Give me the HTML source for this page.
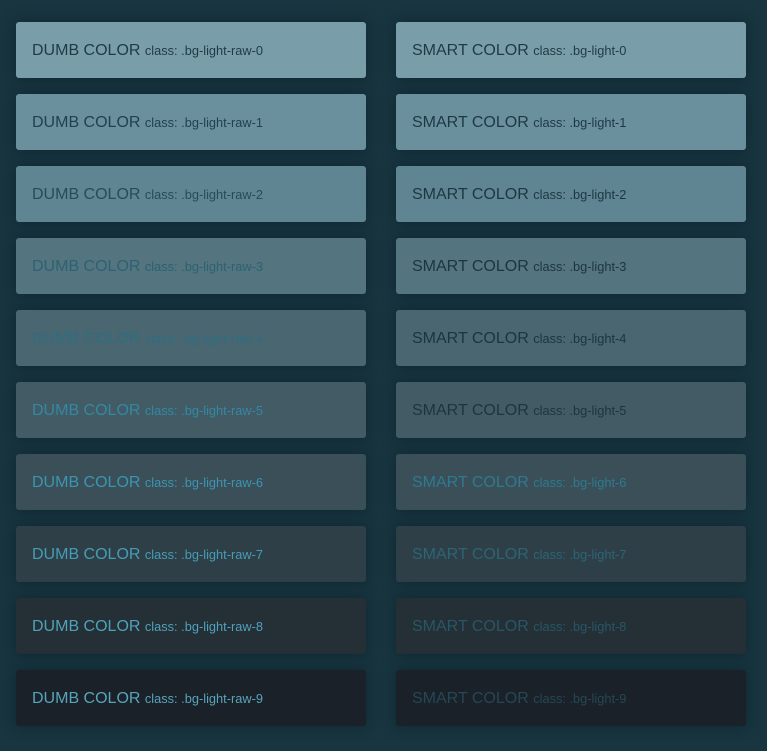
<!DOCTYPE html>
<html><head><meta charset="utf-8"><style>
html,body{margin:0;padding:0;}
body{width:767px;height:751px;background:#183540;font-family:"Liberation Sans",sans-serif;position:relative;overflow:hidden;}
.c{position:absolute;width:350px;height:56px;border-radius:3px;box-shadow:0 0 14px rgba(10,30,38,0.6);box-sizing:border-box;padding-left:16px;line-height:58px;white-space:nowrap;overflow:hidden;}
.b{font-size:16px;}
.s{font-size:12.8px;}
</style></head><body>
<div class="c" style="left:16px;top:22px;background:#7a9ea9;color:#1f3a45"><span class="b">DUMB COLOR</span> <span class="s">class: .bg-light-raw-0</span></div>
<div class="c" style="left:16px;top:94px;background:#6a909e;color:#22414c"><span class="b">DUMB COLOR</span> <span class="s">class: .bg-light-raw-1</span></div>
<div class="c" style="left:16px;top:166px;background:#5f8592;color:#264c59"><span class="b">DUMB COLOR</span> <span class="s">class: .bg-light-raw-2</span></div>
<div class="c" style="left:16px;top:238px;background:#54747f;color:#2c6272"><span class="b">DUMB COLOR</span> <span class="s">class: .bg-light-raw-3</span></div>
<div class="c" style="left:16px;top:310px;background:#4a6670;color:#2d6e82"><span class="b">DUMB COLOR</span> <span class="s">class: .bg-light-raw-4</span></div>
<div class="c" style="left:16px;top:382px;background:#425b65;color:#3488a3"><span class="b">DUMB COLOR</span> <span class="s">class: .bg-light-raw-5</span></div>
<div class="c" style="left:16px;top:454px;background:#3a4f58;color:#3c95b0"><span class="b">DUMB COLOR</span> <span class="s">class: .bg-light-raw-6</span></div>
<div class="c" style="left:16px;top:526px;background:#2f3f47;color:#449db7"><span class="b">DUMB COLOR</span> <span class="s">class: .bg-light-raw-7</span></div>
<div class="c" style="left:16px;top:598px;background:#242f36;color:#50a2ba"><span class="b">DUMB COLOR</span> <span class="s">class: .bg-light-raw-8</span></div>
<div class="c" style="left:16px;top:670px;background:#1a2128;color:#58a4ba"><span class="b">DUMB COLOR</span> <span class="s">class: .bg-light-raw-9</span></div>

<div class="c" style="left:396px;top:22px;background:#7a9ea9;color:#1f3a45"><span class="b">SMART COLOR</span> <span class="s">class: .bg-light-0</span></div>
<div class="c" style="left:396px;top:94px;background:#6a909e;color:#1e3843"><span class="b">SMART COLOR</span> <span class="s">class: .bg-light-1</span></div>
<div class="c" style="left:396px;top:166px;background:#5f8592;color:#1d3742"><span class="b">SMART COLOR</span> <span class="s">class: .bg-light-2</span></div>
<div class="c" style="left:396px;top:238px;background:#54747f;color:#1c3540"><span class="b">SMART COLOR</span> <span class="s">class: .bg-light-3</span></div>
<div class="c" style="left:396px;top:310px;background:#4a6670;color:#1c3540"><span class="b">SMART COLOR</span> <span class="s">class: .bg-light-4</span></div>
<div class="c" style="left:396px;top:382px;background:#425b65;color:#1c3540"><span class="b">SMART COLOR</span> <span class="s">class: .bg-light-5</span></div>
<div class="c" style="left:396px;top:454px;background:#3a4f58;color:#2e7a90"><span class="b">SMART COLOR</span> <span class="s">class: .bg-light-6</span></div>
<div class="c" style="left:396px;top:526px;background:#2f3f47;color:#2b6577"><span class="b">SMART COLOR</span> <span class="s">class: .bg-light-7</span></div>
<div class="c" style="left:396px;top:598px;background:#242f36;color:#285767"><span class="b">SMART COLOR</span> <span class="s">class: .bg-light-8</span></div>
<div class="c" style="left:396px;top:670px;background:#1a2128;color:#244855"><span class="b">SMART COLOR</span> <span class="s">class: .bg-light-9</span></div>
</body></html>
